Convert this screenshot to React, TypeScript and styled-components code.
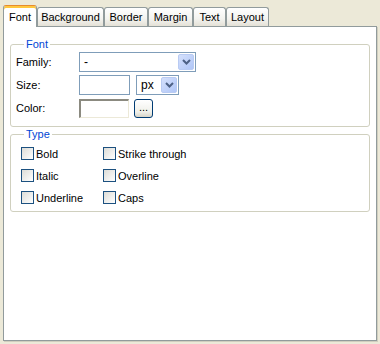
import { createGlobalStyle } from 'styled-components';
import styled from 'styled-components';

const GlobalStyle = createGlobalStyle`
  html, body {
    margin: 0;
    padding: 0;
    background: #ece9d8;
  }
  body {
    font-family: 'Liberation Sans', Arial, sans-serif;
    font-size: 11px;
    color: #000000;
  }
`;

const tabs = [
  { label: 'Font', width: 34 },
  { label: 'Background', width: 67 },
  { label: 'Border', width: 44 },
  { label: 'Margin', width: 45 },
  { label: 'Text', width: 33 },
  { label: 'Layout', width: 43 },
];

const typeOptions = [
  ['Bold', 'Strike through'],
  ['Italic', 'Overline'],
  ['Underline', 'Caps'],
];

const Chevron = () => (
  <svg width="9" height="6" viewBox="0 0 9 6">
    <path d="M1 1 L4.5 4.5 L8 1" fill="none" stroke="#4d6185" strokeWidth="2" />
  </svg>
);

const Select = ({ width, value }: { width: number; value: string }) => (
  <SelectBox $width={width}>
    <SelectValue>{value}</SelectValue>
    <DropButton>
      <Chevron />
    </DropButton>
  </SelectBox>
);

export default function App() {
  return (
    <>
      <GlobalStyle />
      <Window>
        <TabBar>
          {tabs.map((t, i) => (
            <Tab key={t.label} $width={t.width} $active={i === 0}>
              {t.label}
            </Tab>
          ))}
        </TabBar>
        <Panel>
          <Group>
            <Legend>Font</Legend>
            <FormRows>
              <FormRow>
                <Label>Family:</Label>
                <Select width={117} value="-" />
              </FormRow>
              <FormRow>
                <Label>Size:</Label>
                <TextInput $width={51} />
                <Select width={43} value="px" />
              </FormRow>
              <FormRow>
                <Label>Color:</Label>
                <ColorInput />
                <DotsButton>...</DotsButton>
              </FormRow>
            </FormRows>
          </Group>
          <TypeGroup>
            <Legend>Type</Legend>
            <CheckGrid>
              {typeOptions.flat().map((o) => (
                <CheckItem key={o}>
                  <CheckBox />
                  <span>{o}</span>
                </CheckItem>
              ))}
            </CheckGrid>
          </TypeGroup>
        </Panel>
      </Window>
    </>
  );
}

const Window = styled.div`
  width: 380px;
  height: 344px;
  padding: 5px 0 0 3px;
  box-sizing: border-box;
`;

const TabBar = styled.div`
  display: flex;
  align-items: flex-end;
  height: 22px;
  margin-bottom: -1px;
  position: relative;
  z-index: 1;
`;

const Tab = styled.div<{ $width: number; $active?: boolean }>`
  box-sizing: border-box;
  width: ${({ $width }) => $width}px;
  height: ${({ $active }) => ($active ? 22 : 19)}px;
  margin-bottom: ${({ $active }) => ($active ? 0 : 1)}px;
  display: flex;
  align-items: center;
  justify-content: center;
  padding-top: ${({ $active }) => ($active ? 1 : 0)}px;
  border: 1px solid #919b9c;
  border-bottom: none;
  border-radius: 3px 3px 0 0;
  background: ${({ $active }) =>
    $active ? '#ffffff' : 'linear-gradient(#ffffff, #f3f3ef 60%, #e4e1d6)'};
  ${({ $active }) =>
    $active &&
    `
    border-top: 1px solid #e68b2c;
    box-shadow: inset 0 2px 0 #ffc73c;
  `}
  white-space: nowrap;
`;

const Panel = styled.div`
  box-sizing: border-box;
  width: 374px;
  height: 315px;
  background: #ffffff;
  border: 1px solid #919b9c;
  box-shadow: 1px 1px 0 #d0cebf;
  padding: 11px 6px 0 6px;
  display: flex;
  flex-direction: column;
`;

const Group = styled.fieldset`
  margin: 0;
  padding: 0 5px 8px 5px;
  border: 1px solid #d0d0bf;
  border-radius: 3px;
  min-width: 0;
`;

const TypeGroup = styled(Group)`
  margin-top: 1px;
  padding-bottom: 7px;
`;

const Legend = styled.legend`
  color: #0046d5;
  padding: 0 2px;
  margin-left: 8px;
  line-height: 13px;
  font-size: 11px;
`;

const FormRows = styled.div`
  display: flex;
  flex-direction: column;
  gap: 3px;
  margin-top: 1px;
`;

const FormRow = styled.div`
  display: flex;
  align-items: center;
  height: 20px;
  gap: 6px;
`;

const Label = styled.div`
  width: 57px;
`;

const SelectBox = styled.div<{ $width: number }>`
  box-sizing: border-box;
  width: ${({ $width }) => $width}px;
  height: 20px;
  border: 1px solid #7f9db9;
  background: #ffffff;
  display: flex;
  align-items: center;
  justify-content: space-between;
  padding: 1px;
`;

const SelectValue = styled.span`
  padding-left: 3px;
  font-size: 12px;
`;

const DropButton = styled.div`
  box-sizing: border-box;
  width: 16px;
  height: 16px;
  border-radius: 2px;
  border: 1px solid #b9cbf3;
  background: linear-gradient(135deg, #d4e0fc, #b0c6f7);
  display: flex;
  align-items: center;
  justify-content: center;
`;

const TextInput = styled.div<{ $width: number }>`
  box-sizing: border-box;
  width: ${({ $width }) => $width}px;
  height: 20px;
  border: 1px solid #7f9db9;
  background: #ffffff;
`;

const ColorInput = styled.div`
  box-sizing: border-box;
  width: 50px;
  height: 19px;
  border: 1px solid #ece9d8;
  border-top: 2px solid #8b8a80;
  border-left: 2px solid #8b8a80;
  background: #ffffff;
`;

const DotsButton = styled.div`
  box-sizing: border-box;
  width: 19px;
  height: 19px;
  margin-left: -1px;
  border: 1px solid #003c74;
  border-radius: 3px;
  background: linear-gradient(#ffffff, #f0f0ea 70%, #d8d5c8);
  display: flex;
  align-items: center;
  justify-content: center;
  padding-bottom: 3px;
`;

const CheckGrid = styled.div`
  display: grid;
  grid-template-columns: 82px auto;
  row-gap: 9px;
  padding: 6px 0 0 5px;
`;

const CheckItem = styled.div`
  display: flex;
  align-items: center;
  gap: 2px;
  height: 13px;
`;

const CheckBox = styled.div`
  box-sizing: border-box;
  width: 13px;
  height: 13px;
  border: 1px solid #1c5180;
  background: linear-gradient(135deg, #dcdcd7, #ffffff);
`;
